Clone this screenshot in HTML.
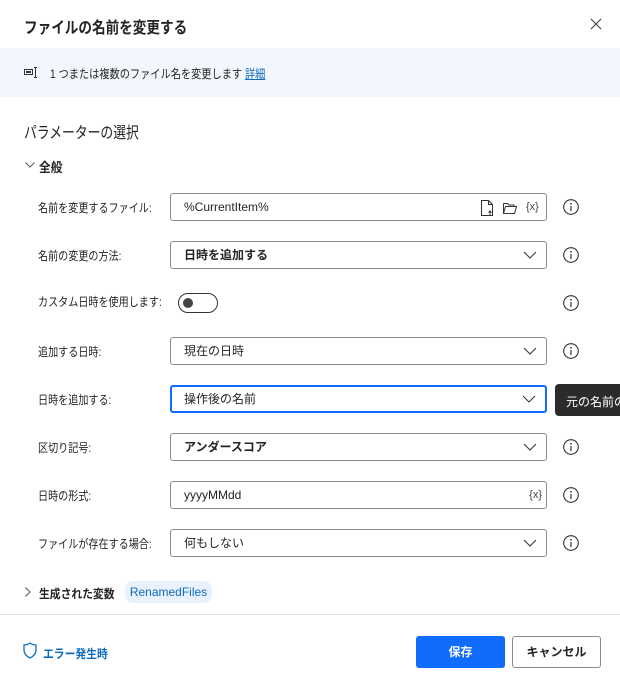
<!DOCTYPE html>
<html><head><meta charset="utf-8"><style>
*{box-sizing:border-box;margin:0;padding:0}
body{width:620px;height:688px;overflow:hidden;background:#fff;font-family:"Liberation Sans","Noto Sans CJK JP",sans-serif;color:#242424;position:relative}
.a{position:absolute;white-space:nowrap}
.s{display:inline-block;transform-origin:left center}
.lbl{position:absolute;left:38px;font-size:12px;color:#242424;white-space:nowrap;transform:scaleX(0.84);transform-origin:left center}
.inp{position:absolute;left:170px;width:377px;height:28px;border:1px solid #8a8a8a;border-radius:3px;font-size:12px;padding-left:13px;line-height:26px}
.b{font-weight:bold}
.chev{position:absolute;right:9px;top:9px;width:14px;height:8px}
.info{position:absolute;left:563px;width:16px;height:16px}
</style></head><body>
<div class="a" style="left:24px;top:14px;font-size:16px;font-weight:bold;color:#242424;transform:scaleX(0.85);transform-origin:left">ファイルの名前を変更する</div>
<svg class="a" style="left:590px;top:18px" width="12" height="12"><path d="M1 1l10 10M11 1L1 11" stroke="#444" stroke-width="1.2"/></svg>
<div class="a" style="left:0;top:48px;width:620px;height:49px;background:#f3f6fc"></div>
<svg class="a" style="left:24px;top:67px" width="14" height="11"><rect x="0.5" y="2.5" width="8" height="5" fill="none" stroke="#333"/><rect x="2" y="4" width="5" height="2" fill="#333"/><path d="M10 0.5h3M11.5 0.5v10M10 10.5h3" stroke="#333" fill="none"/></svg>
<div class="a" style="left:50px;top:65px;font-size:12px;transform:scaleX(0.85);transform-origin:left">1 つまたは複数のファイル名を変更します <span style="color:#0f6cbd;text-decoration:underline">詳細</span></div>
<div class="a" style="left:24px;top:119px;font-size:16px;color:#242424;transform:scaleX(0.8);transform-origin:left">パラメーターの選択</div>
<svg class="a" style="left:25px;top:162px" width="10" height="6"><path d="M0.5 0.5l4.5 4.5 4.5-4.5" stroke="#555" fill="none"/></svg>
<div class="a b" style="left:39px;top:157px;font-size:13px;transform:scaleX(0.9);transform-origin:left">全般</div>

<svg width="0" height="0" style="position:absolute"><defs><symbol id="i" viewBox="0 0 16 16"><circle cx="8" cy="8" r="7.3" fill="none" stroke="#333" stroke-width="1.1"/><circle cx="8" cy="4.8" r="0.9" fill="#333"/><path d="M8 7v5" stroke="#333" stroke-width="1.2"/></symbol></defs></svg>

<div class="lbl" style="top:199px">名前を変更するファイル:</div>
<div class="inp" style="top:193px">%CurrentItem%
<svg class="a" style="left:308px;top:5px" width="60" height="18"><path d="M2.5 1.5h7l4 4v11h-11z M9.5 1.5v4h4" fill="none" stroke="#333"/><path d="M11 17v-5M9.5 13.5l1.5-1.5 1.5 1.5" stroke="#333" fill="none"/><path d="M24.5 4.5h4l1.5 1.5h5v2 M24.5 4.5v10h11l2-7h-11l-2 7" fill="none" stroke="#333"/></svg>
<span class="a" style="left:355px;top:0;font-size:11px;color:#444">{x}</span></div>
<svg class="info" style="top:199px"><use href="#i"/></svg>

<div class="lbl" style="top:247px">名前の変更の方法:</div>
<div class="inp b" style="top:241px">日時を追加する<svg class="chev"><path d="M1 1l6 6 6-6" stroke="#333" fill="none"/></svg></div>
<svg class="info" style="top:247px"><use href="#i"/></svg>

<div class="lbl" style="top:293px">カスタム日時を使用します:</div>
<div class="a" style="left:178px;top:293px;width:40px;height:20px;border:1px solid #333;border-radius:10px"><div class="a" style="left:4px;top:4px;width:10px;height:10px;border-radius:50%;background:#444"></div></div>
<svg class="info" style="top:295px"><use href="#i"/></svg>

<div class="lbl" style="top:343px">追加する日時:</div>
<div class="inp" style="top:337px">現在の日時<svg class="chev"><path d="M1 1l6 6 6-6" stroke="#333" fill="none"/></svg></div>
<svg class="info" style="top:343px"><use href="#i"/></svg>

<div class="lbl" style="top:391px">日時を追加する:</div>
<div class="inp" style="top:385px;border:2px solid #0f6cfd;line-height:24px;padding-left:12px">操作後の名前<svg class="chev" style="top:8px"><path d="M1 1l6 6 6-6" stroke="#333" fill="none"/></svg></div>
<div class="a" style="left:555px;top:384px;width:70px;height:32px;background:#2b2b2b;border-radius:4px;color:#fff;font-size:12px;padding:9px 0 0 11px;overflow:hidden">元の名前の</div>

<div class="lbl" style="top:439px">区切り記号:</div>
<div class="inp b" style="top:433px">アンダースコア<svg class="chev"><path d="M1 1l6 6 6-6" stroke="#333" fill="none"/></svg></div>
<svg class="info" style="top:439px"><use href="#i"/></svg>

<div class="lbl" style="top:487px">日時の形式:</div>
<div class="inp" style="top:481px">yyyyMMdd<span class="a" style="right:4px;top:0;font-size:11px;color:#444">{x}</span></div>
<svg class="info" style="top:487px"><use href="#i"/></svg>

<div class="lbl" style="top:535px">ファイルが存在する場合:</div>
<div class="inp" style="top:529px">何もしない<svg class="chev"><path d="M1 1l6 6 6-6" stroke="#333" fill="none"/></svg></div>
<svg class="info" style="top:535px"><use href="#i"/></svg>

<svg class="a" style="left:25px;top:587px" width="6" height="10"><path d="M0.5 0.5l4.5 4.5-4.5 4.5" stroke="#555" fill="none"/></svg>
<div class="a b" style="left:39px;top:585px;font-size:12px;transform:scaleX(0.9);transform-origin:left">生成された変数</div>
<div class="a" style="left:125px;top:581px;width:87px;height:22px;background:#e8f1fd;border-radius:8px;color:#0f6cbd;font-size:12px;text-align:center;line-height:22px">RenamedFiles</div>

<div class="a" style="left:0;top:614px;width:620px;height:1px;background:#e0e0e0"></div>
<svg class="a" style="left:23px;top:642px" width="14" height="17"><path d="M7 1c2 1.5 4 2 6 2v5c0 4-3 6.5-6 8-3-1.5-6-4-6-8V3c2 0 4-.5 6-2z" fill="none" stroke="#0f6cbd" stroke-width="1.3"/></svg>
<div class="a b" style="left:43px;top:645px;font-size:12px;color:#0f6cbd;transform:scaleX(0.9);transform-origin:left">エラー発生時</div>
<div class="a b" style="left:416px;top:636px;width:89px;height:32px;background:#0f6cfd;border-radius:3px;color:#fff;font-size:12px;text-align:center;line-height:32px">保存</div>
<div class="a b" style="left:512px;top:636px;width:89px;height:32px;border:1px solid #8a8a8a;border-radius:3px;font-size:12px;text-align:center;line-height:30px">キャンセル</div>
</body></html>
